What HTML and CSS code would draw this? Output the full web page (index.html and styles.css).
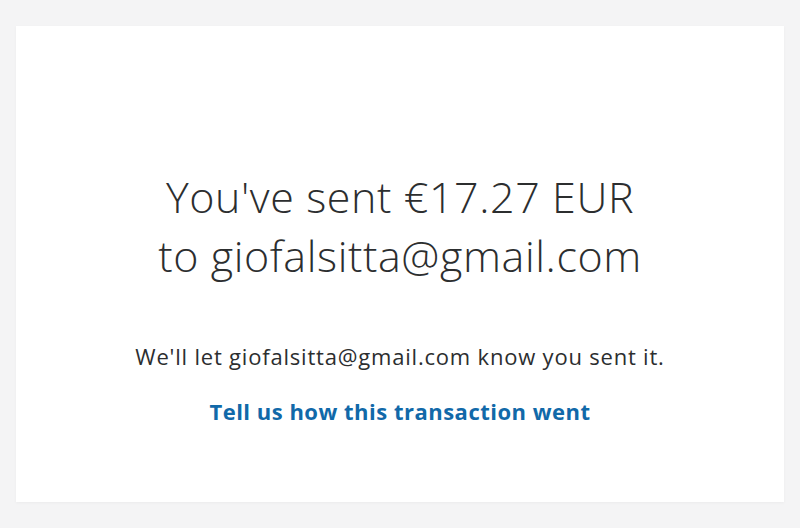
FILE: index.html
```html
<!DOCTYPE html>
<html lang="en">
<head>
  <meta charset="UTF-8">
  <meta name="viewport" content="width=device-width, initial-scale=1.0">
  <title>Payment sent</title>
  <link rel="stylesheet" href="styles.css">
</head>
<body>

  <div class="card">
    <h1 class="sent-title">You've sent €17.27 EUR<br>to giofalsitta@gmail.com</h1>
    <p class="sent-note">We'll let giofalsitta@gmail.com know you sent it.</p>
    <a class="feedback-link" href="#">Tell us how this transaction went</a>
  </div>

</body>
</html>
```

FILE: styles.css
```css
body {
  margin: 0;
  padding: 26px 16px 26px 16px;
  background-color: #f4f4f5;
  font-family: "Open Sans", Lato, sans-serif;
  color: #2c2e2f;
}

.card {
  height: 476px;
  box-sizing: border-box;
  padding-top: 141px;
  background-color: #ffffff;
  box-shadow: 0 1px 3px rgba(0, 0, 0, 0.04);
  text-align: center;
}

.sent-title {
  margin: 0;
  font-size: 43px;
  font-weight: 300;
  line-height: 59px;
  letter-spacing: 0.6px;
}

.sent-note {
  margin: 56px 0 0 0;
  font-size: 22px;
  line-height: 30px;
  letter-spacing: 0.8px;
}

.feedback-link {
  display: inline-block;
  margin-top: 25px;
  font-size: 22px;
  font-weight: bold;
  letter-spacing: 0.5px;
  color: #1169a9;
  text-decoration: none;
}
```
